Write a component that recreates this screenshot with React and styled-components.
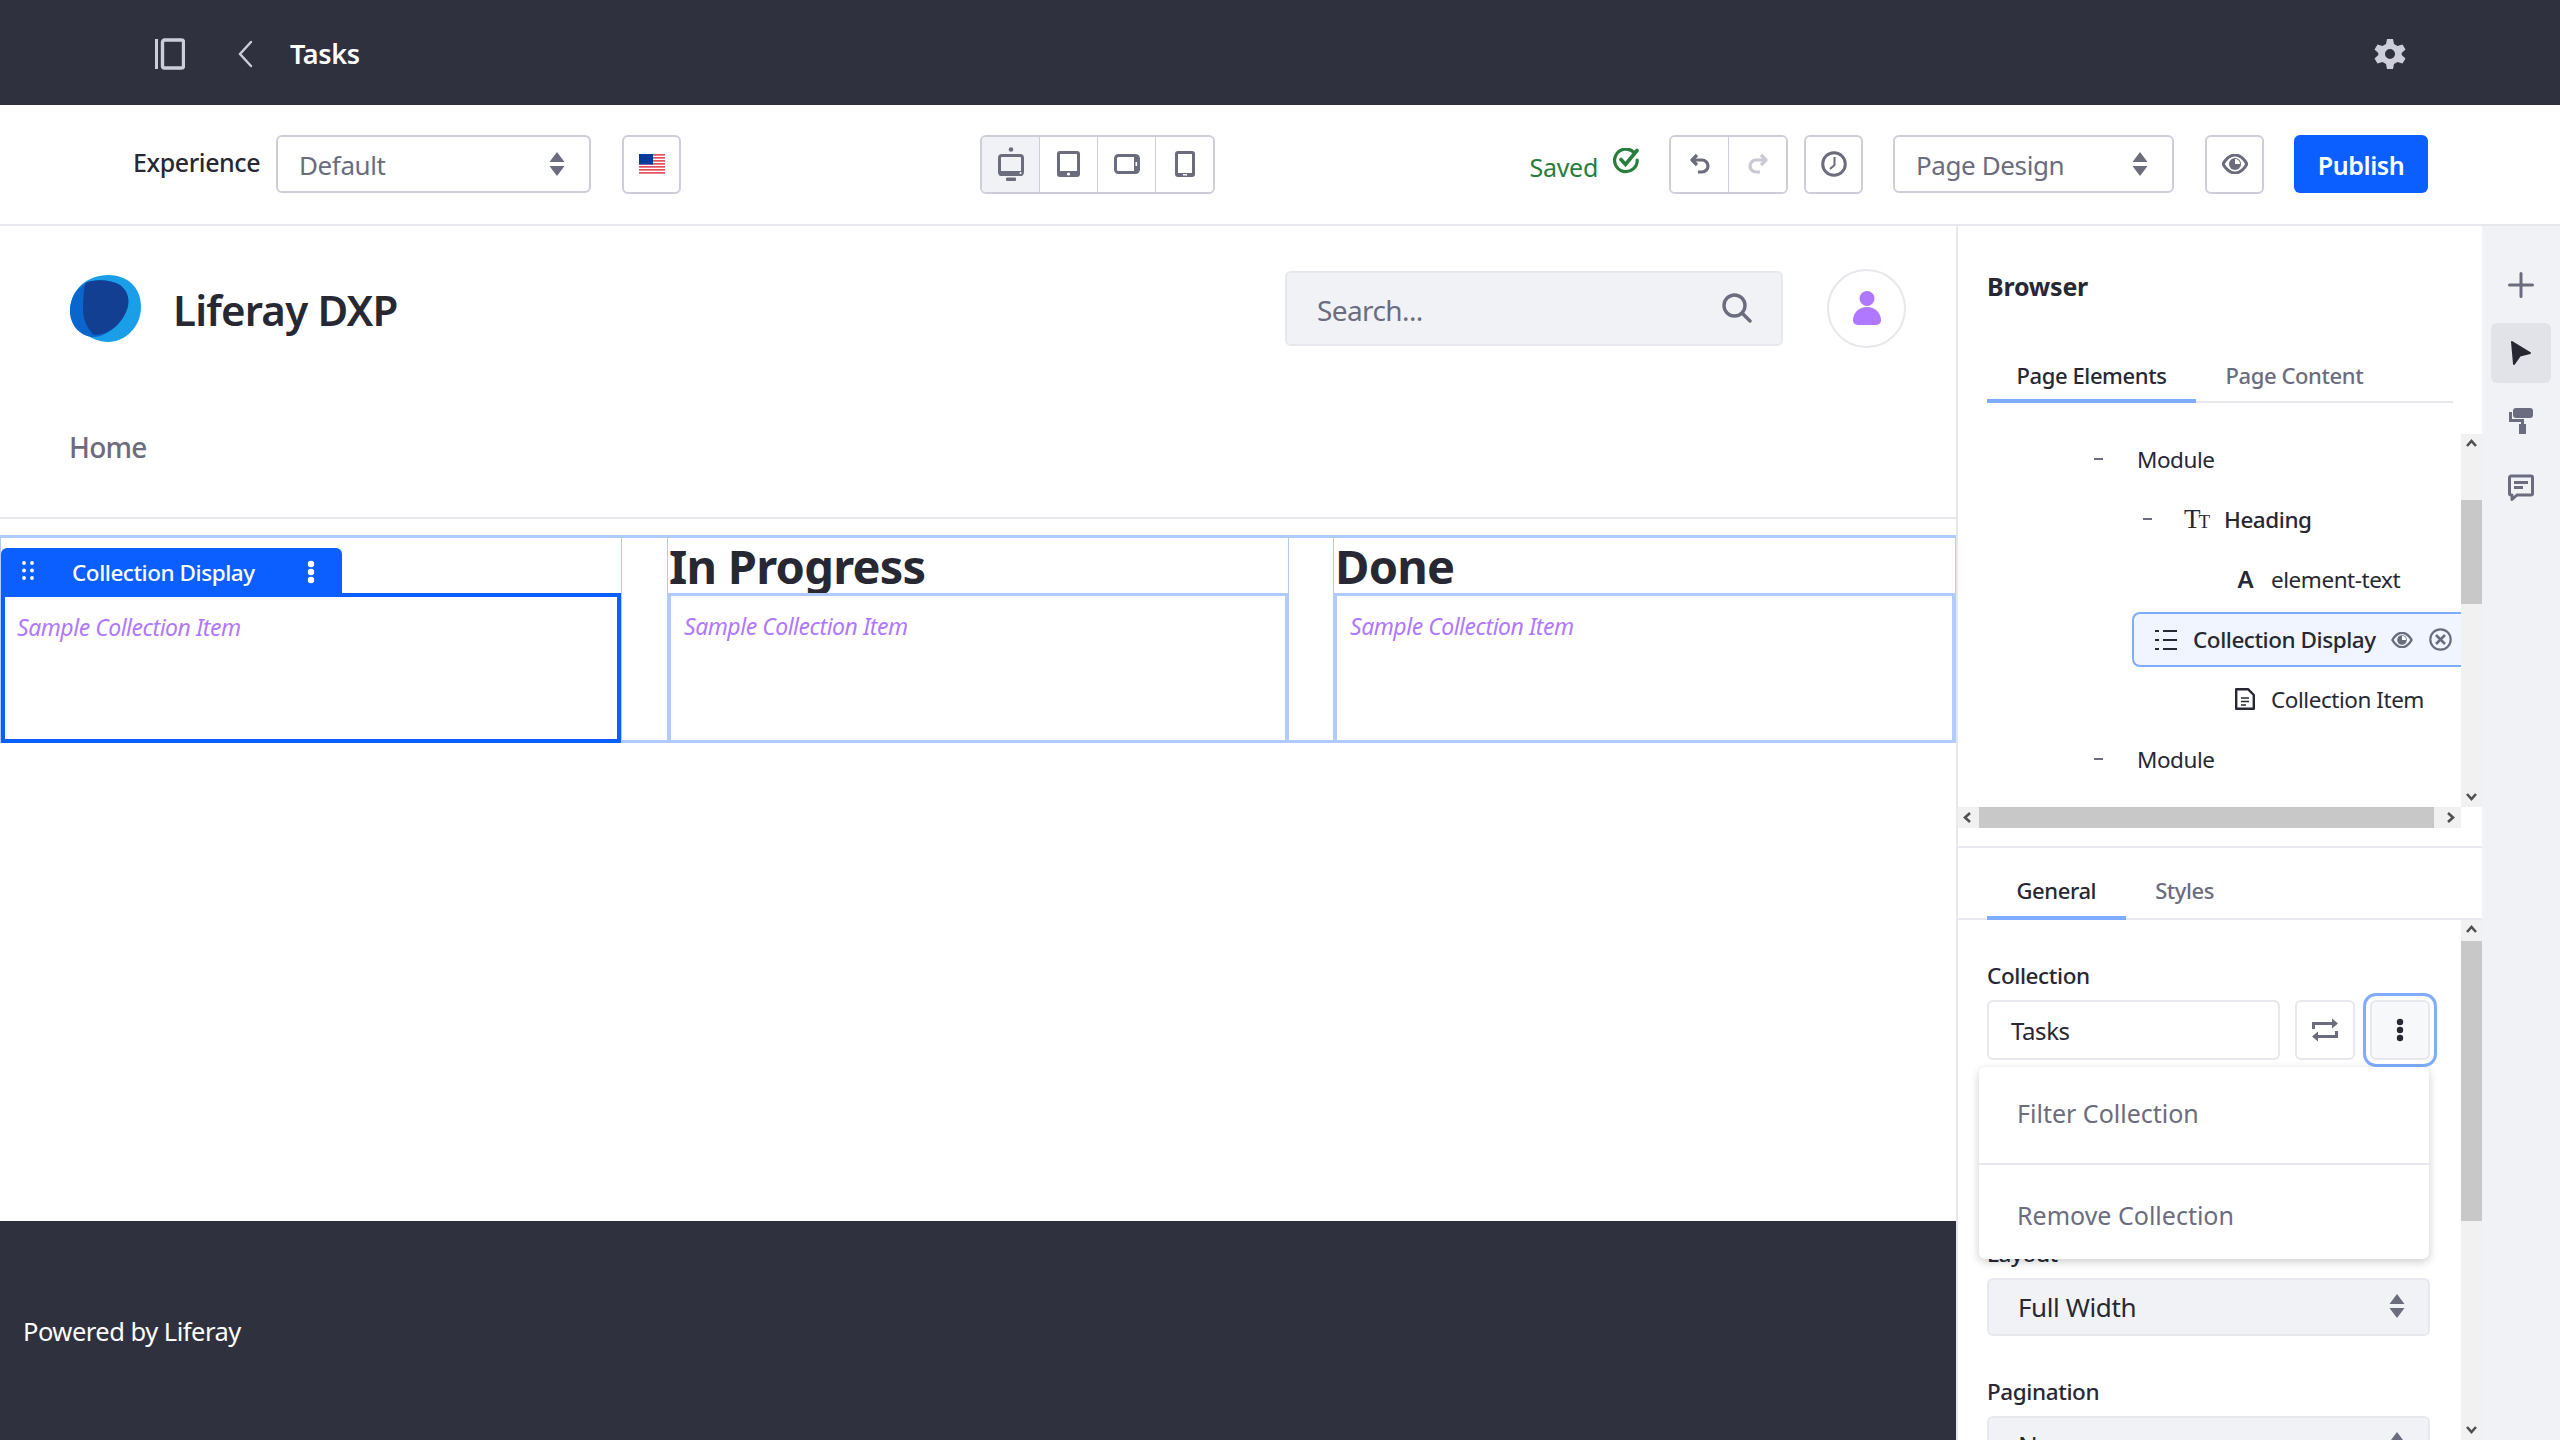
import React from 'react';
import styled, { createGlobalStyle } from 'styled-components';

const Global = createGlobalStyle`
  html, body { margin: 0; padding: 0; background: #fff; }
  body { font-family: "Noto Sans", "Open Sans", sans-serif; color: #272833; }
  * { box-sizing: border-box; }
`;

const Page = styled.div`
  width: 2560px; height: 1440px; overflow: hidden;
  display: flex; flex-direction: column; background: #fff;
`;

/* ---------- top bar ---------- */
const TopBar = styled.header`
  height: 105px; flex: none; background: #30313f;
  display: flex; align-items: center; padding: 3px 154px 0 155px; color: #fff;
`;
const PanelIcon = styled.svg`width: 30px; height: 32px; flex: none;`;
const BackIcon = styled.svg`width: 16px; height: 28px; margin-left: 52px; flex: none;`;
const PageName = styled.div`
  font-size: 27px; font-weight: 600; margin-left: 37px; letter-spacing: -0.35px; margin-top: -2px;
`;
const GearIcon = styled.svg`width: 32px; height: 32px; margin-left: auto; flex: none;`;

/* ---------- toolbar ---------- */
const Toolbar = styled.div`
  height: 121px; flex: none; border-bottom: 2px solid #e7e7ed;
  display: grid; grid-template-columns: 847px 235px 1fr; align-items: center;
  padding: 0 132px 1px 133px;
`;
const ToolLeft = styled.div`display: flex; align-items: center;`;
const ToolRight = styled.div`display: flex; align-items: center; justify-content: flex-end;`;
const ExpLabel = styled.div`
  font-size: 25px; font-weight: 500; width: 143px; margin-top: -4px; letter-spacing: -0.42px;
`;
const Select = styled.div`
  width: ${p => p.$w}px; height: 58px; flex: none; margin-left: ${p => p.$ml || 0}px;
  border: 2px solid ${p => (p.$soft ? '#e7e7ed' : '#cdced9')}; border-radius: 6px;
  background: ${p => (p.$soft ? '#f1f2f5' : '#fff')};
  color: ${p => (p.$soft ? '#272833' : '#6b6c7e')};
  display: flex; align-items: center; justify-content: space-between;
  padding: ${p => (p.$soft ? 0 : 2)}px ${p => (p.$soft ? 23 : 24)}px 0 ${p => (p.$soft ? 29 : 21)}px;
  font-size: 26px; letter-spacing: -0.4px;
`;
const Stepper = styled.svg`width: 16px; height: 24px; flex: none; margin-top: -2px;`;
const IconBtn = styled.div`
  width: 59px; height: 59px; flex: none; border: 2px solid #cdced9; border-radius: 6px;
  display: flex; align-items: center; justify-content: center; background: #fff;
  margin-left: ${p => p.$ml || 0}px;
`;
const Segmented = styled.div`
  display: flex; height: 59px; flex: none; margin-left: ${p => p.$ml || 0}px; width: ${p => p.$w}px;
  border: 2px solid #cdced9; border-radius: 6px; overflow: hidden;
`;
const Segment = styled.div`
  flex: 1; display: flex; align-items: center; justify-content: center;
  background: ${p => (p.$active ? '#f1f2f5' : '#fff')};
  & + & { border-left: 1px solid #cdced9; }
`;
const Saved = styled.div`
  display: flex; align-items: center; color: #287d3c; font-size: 25px; letter-spacing: -0.3px;
  & > span { margin-top: 5px; }
  & > svg { margin-left: 15px; margin-top: -6px; }
`;
const Publish = styled.div`
  width: 134px; height: 58px; margin-left: 30px; background: #0b5fff; color: #fff; border-radius: 6px;
  display: flex; align-items: center; justify-content: center; font-size: 25px; font-weight: 600;
  letter-spacing: -0.4px; padding-top: 2px;
`;

/* ---------- body ---------- */
const Body = styled.div`flex: 1; min-height: 0; display: flex;`;
const Main = styled.main`
  width: 1956px; flex: none; display: flex; flex-direction: column;
`;
const SiteHeader = styled.div`
  height: 164px; flex: none; display: flex; align-items: center; padding: 0 50px 0 70px;
`;
const LogoMark = styled.svg`width: 71px; height: 67px; flex: none;`;
const SiteName = styled.div`
  font-size: 42px; font-weight: 600; margin-left: 32px; letter-spacing: -0.8px; padding-top: 2px;
`;
const Search = styled.div`
  width: 498px; height: 75px; margin-left: auto; background: #f1f2f5;
  border: 2px solid #e7e7ed; border-radius: 6px;
  display: flex; align-items: center; justify-content: space-between;
  padding: 0 29px 0 30px; font-size: 28px; color: #6b6c7e; letter-spacing: -0.6px;
  & > span { padding-top: 3px; }
`;
const Avatar = styled.div`
  width: 79px; height: 79px; margin-left: 44px; border-radius: 50%; border: 2px solid #e7e7ed;
  display: flex; align-items: center; justify-content: center; flex: none;
`;
const Nav = styled.nav`
  height: 129px; flex: none; border-bottom: 2px solid #e7e7ed; padding: 38px 0 0 69px;
  font-size: 28px; line-height: 38px; color: #6b6c7e; font-weight: 500; letter-spacing: -0.75px;
`;
const Columns = styled.div`
  margin-top: 16px; height: 208px; flex: none;
  display: grid; grid-template-columns: 621px 45px 622px 44px 623px;
  border-top: 3px solid #b0ccff; border-left: 1px solid #b0ccff;
`;
const Column = styled.div`
  position: relative; display: flex; flex-direction: column; min-width: 0;
  border-left: ${p => (p.$first ? 0 : 1)}px solid #b0ccff; border-right: 1px solid #b0ccff;
`;
const Gutter = styled.div`border-bottom: 3px solid #b0ccff;`;
const ColHeading = styled.h2`
  margin: 0; height: 55px; flex: none; font-size: 47px; font-weight: 700; line-height: 57px;
  padding-left: 1px; letter-spacing: -0.75px; color: #272833; white-space: nowrap;
`;
const CollectionBox = styled.div`
  flex: 1; min-height: 0; padding: 15px 0 0 ${p => (p.$sel ? 12 : 13)}px;
  border: ${p => (p.$sel ? '4px solid #0b5fff' : '3px solid #b0ccff')};
  font-size: 23px; font-style: italic; color: #af78ff; line-height: 30px; letter-spacing: -0.48px;
`;
const ElementLabel = styled.div`
  position: absolute; left: 0; top: 10px; width: 341px; height: 46px;
  background: #0b5fff; color: #fff; border-radius: 6px 6px 0 0;
  display: flex; align-items: center; padding-left: 21px; font-size: 22.5px; font-weight: 500; letter-spacing: -0.45px;
  & > span { padding-top: 3px; }
`;
const Grip = styled.svg`width: 12px; height: 19px; flex: none; margin-right: 38px; margin-top: -2px;`;
const Kebab = styled.svg`width: 8px; height: 24px; flex: none;`;
const LabelKebab = styled(Kebab)`margin-left: 52px; margin-top: 2px;`;
const Spacer = styled.div`flex: 1;`;
const Footer = styled.footer`
  height: 219px; flex: none; background: #30313f; color: #fff;
  display: flex; align-items: center; padding: 0 0 0 23px; font-size: 25.5px; letter-spacing: -0.5px;
`;

/* ---------- sidebar ---------- */
const Side = styled.aside`
  width: 526px; flex: none; border-left: 2px solid #e7e7ed;
  display: flex; flex-direction: column; min-height: 0;
`;
const SideTitle = styled.div`
  height: 122px; flex: none; padding: 42px 0 0 29px;
  font-size: 25px; line-height: 36px; font-weight: 700; letter-spacing: -0.2px;
`;
const Tabs = styled.div`
  flex: none; display: flex; height: ${p => p.$h}px; margin-right: ${p => p.$mr}px;
  margin-left: ${p => p.$ml}px; padding-left: ${p => p.$pl}px;
  border-bottom: 2px solid #e7e7ed;
`;
const Tab = styled.div`
  height: calc(100% + 2px); padding: ${p => p.$pt || 2}px 29.5px 0; display: flex; align-items: center;
  font-size: 22px; font-weight: 500; letter-spacing: -0.4px;
  color: ${p => (p.$active ? '#272833' : '#6b6c7e')};
  border-bottom: ${p => (p.$active ? '4px solid #80acff' : '4px solid transparent')};
`;
const TreeArea = styled.div`
  margin-top: 31px; height: 373px; flex: none; display: flex; min-height: 0;
`;
const Tree = styled.div`flex: 1; min-width: 0; overflow: hidden;`;
const TreeInner = styled.div`margin-top: -5px;`;
const Row = styled.div`
  height: 60px; display: flex; align-items: center; padding-left: ${p => p.$pad}px;
  font-size: 22.5px; letter-spacing: -0.45px; color: #272833; white-space: nowrap;
  font-weight: ${p => (p.$strong ? 500 : 400)};
`;
const SelRow = styled.div`
  height: 55px; margin: 3px 0 2px 174px; display: flex; align-items: center;
  padding-left: 21px; background: #f0f5ff; border: 2px solid #80acff; border-right: 0;
  border-radius: 8px 0 0 8px; font-size: 22.5px; letter-spacing: -0.45px; font-weight: 500; white-space: nowrap;
`;
const RowGap = styled.span`width: 15px; flex: none;`;
const Dash = styled.span`
  width: 9px; height: 2px; background: #6b6c7e; flex: none; margin-right: 34px;
`;
const TreeGlyph = styled.span`
  flex: none; width: ${p => p.$w}px; margin-right: ${p => p.$mr}px; text-align: center; line-height: 1;
  display: flex; align-items: baseline; justify-content: center;
  font-family: ${p => (p.$serif ? '"Liberation Serif", serif' : '"Noto Sans", sans-serif')};
  font-size: ${p => p.$size}px; font-weight: ${p => (p.$serif ? 400 : 600)}; letter-spacing: 0;
`;
const SmallGlyph = styled.span`font-size: 19px; margin-left: -2px;`;
const TreeIcon = styled.svg`flex: none; width: ${p => p.$w}px; height: ${p => p.$h}px; margin-right: ${p => p.$mr}px;`;
const CloseIcon = styled.svg`width: 23px; height: 23px; flex: none; margin-left: 16px;`;
const VBar = styled.div`
  width: 21px; flex: none; background: #f1f1f1; display: flex; flex-direction: column;
`;
const BarArrow = styled.div`
  height: 21px; width: 21px; flex: none; display: flex; align-items: center; justify-content: center;
`;
const BarThumbV = styled.div`height: ${p => p.$h}px; flex: none; background: #c8c8c8; margin-top: ${p => p.$mt}px;`;
const BarFill = styled.div`flex: 1;`;
const HBar = styled.div`
  height: 21px; flex: none; margin-right: 21px; background: #f1f1f1; display: flex; align-items: stretch;
`;
const BarThumbH = styled.div`width: ${p => p.$w}px; flex: none; background: #c8c8c8;`;
const SideDivider = styled.div`height: 2px; margin-top: 18px; flex: none; background: #e7e7ed;`;
const Lower = styled.div`flex: 1; min-height: 0; display: flex; overflow: hidden;`;
const Form = styled.div`
  position: relative; flex: 1; min-width: 0; padding: 41px 0 0 29px;
`;
const FieldLabel = styled.div`
  font-size: 22.5px; line-height: 30px; font-weight: 500; letter-spacing: -0.4px;
`;
const InputRow = styled.div`display: flex; align-items: center; margin-top: 9px; `;
const Input = styled.div`
  width: 293px; height: 60px; border: 2px solid #e7e7ed; border-radius: 6px; background: #fff;
  display: flex; align-items: center; padding-left: 22px; font-size: 24px; letter-spacing: -0.4px; color: #272833;
`;
const SquareBtn = styled.div`
  width: 60px; height: 60px; flex: none; margin-left: 15px; border: 2px solid #e7e7ed; border-radius: 6px; background: #fff;
  display: flex; align-items: center; justify-content: center;
`;
const FocusBtn = styled(SquareBtn)`
  background: #f7f8f9; border-color: #e7e7ed; box-shadow: 0 0 0 4px #fff, 0 0 0 7px #80acff;
`;
const Dropdown = styled.div`
  position: absolute; left: 21px; top: 147px; width: 450px; height: 192px; background: #fff; border-radius: 6px;
  box-shadow: 0 3px 10px rgba(0,0,0,0.2); z-index: 2; display: flex; flex-direction: column;
`;
const DropItem = styled.div`
  height: 96px; flex: none; display: flex; align-items: center; padding: 0 0 4px 38px; font-size: 25px; color: #6b6c7e;
  & + & { border-top: 2px solid #e7e7ed; padding: 6px 0 0 38px; }
`;
const LayoutLabel = styled(FieldLabel)`margin-top: 179px;`;
const SecondLabel = styled(FieldLabel)`margin-top: 41px;`;
const FieldSelect = styled.div`margin-top: 9px;`;

/* ---------- rail ---------- */
const Rail = styled.nav`
  flex: 1; background: #f1f2f5; padding: 29px 9px 0 9px; display: flex; flex-direction: column; gap: 8px;
`;
const RailBtn = styled.div`
  width: 60px; height: 60px; border-radius: 6px; display: flex; align-items: center; justify-content: center;
  background: ${p => (p.$active ? '#e2e3e8' : 'transparent')};
`;

/* ---------- icons ---------- */
const G = '#6b6c7e';
const StepIcon = () => (
  <Stepper viewBox="0 0 16 24"><path d="M8 0 L15.5 10 H.5Z M8 24 L.5 14 H15.5Z" fill={G} /></Stepper>
);
const KebabIcon = ({ c = '#fff', as: As = Kebab }) => (
  <As viewBox="0 0 8 24"><circle cx="4" cy="4" r="3.2" fill={c} /><circle cx="4" cy="12" r="3.2" fill={c} /><circle cx="4" cy="20" r="3.2" fill={c} /></As>
);
const Desktop = () => (
  <svg width="26" height="34" viewBox="0 0 26 34">
    <circle cx="13" cy="2.5" r="2.3" fill={G} />
    <rect x="1.5" y="8.5" width="23" height="19" rx="2.5" fill="#f1f2f5" stroke={G} strokeWidth="3" />
    <rect x="1" y="24" width="24" height="5" rx="2" fill={G} />
    <circle cx="22.5" cy="26" r="1" fill="#fff" />
    <rect x="8" y="30.5" width="10" height="3.5" rx="1" fill={G} />
  </svg>
);
const Tablet = () => (
  <svg width="23" height="26" viewBox="0 0 23 26">
    <rect x="0" y="0" width="23" height="26" rx="3" fill={G} />
    <rect x="3" y="3" width="17" height="17" fill="#fff" />
    <circle cx="11.5" cy="23" r="1.6" fill="#fff" />
  </svg>
);
const Landscape = () => (
  <svg width="26" height="20" viewBox="0 0 26 20">
    <rect x="1.5" y="1.5" width="23" height="17" rx="3" fill="#fff" stroke={G} strokeWidth="3" />
    <rect x="20" y="1.5" width="4" height="17" fill={G} />
    <rect x="21.5" y="8" width="1.6" height="4" fill="#fff" />
  </svg>
);
const Phone = () => (
  <svg width="20" height="26" viewBox="0 0 20 26">
    <rect x="0" y="0" width="20" height="26" rx="3" fill={G} />
    <rect x="3" y="3" width="14" height="19" fill="#fff" />
    <rect x="8" y="23" width="4" height="1.5" fill="#fff" />
  </svg>
);
const Flag = () => (
  <svg width="26" height="20" viewBox="0 0 26 20">
    <rect width="26" height="20" fill="#fff" />
    {[0, 3, 6, 9, 12, 15, 18].map(y => <rect key={y} y={y} width="26" height="1.7" fill="#e2515c" />)}
    <rect width="14" height="10.5" fill="#003b9b" />
  </svg>
);
const CheckCircle = () => (
  <svg width="26" height="26" viewBox="0 0 26 26" fill="none" stroke="#287d3c" strokeWidth="3.2" strokeLinecap="round">
    <path d="M20.5 4 A11.3 11.3 0 1 0 24.2 12" />
    <path d="M8 11.5 L12.5 16.5 L24 2.5" strokeWidth="3.6" />
  </svg>
);
const Undo = () => (
  <svg width="20" height="22" viewBox="0 0 20 22" fill="none" stroke={G} strokeWidth="3.2">
    <path d="M7 2 L2 7 L7 12" strokeLinejoin="round" />
    <path d="M3 7 H12 A6 6 0 0 1 12 19 H8" />
  </svg>
);
const Redo = () => (
  <svg width="20" height="22" viewBox="0 0 20 22" fill="none" stroke="#c8c9d2" strokeWidth="3.2">
    <path d="M13 2 L18 7 L13 12" strokeLinejoin="round" />
    <path d="M17 7 H8 A6 6 0 0 0 8 19 H12" />
  </svg>
);
const Clock = () => (
  <svg width="26" height="26" viewBox="0 0 26 26" fill="none" stroke={G}>
    <circle cx="13" cy="13" r="11.3" strokeWidth="3" />
    <path d="M13.5 6 V14 L9 18" strokeWidth="2" />
  </svg>
);
const Eye = ({ w = 26, h = 20, c = G }) => (
  <svg width={w} height={h} viewBox="0 0 26 20">
    <path d="M1 10 C5 3 9 1 13 1 C17 1 21 3 25 10 C21 17 17 19 13 19 C9 19 5 17 1 10Z" fill="none" stroke={c} strokeWidth="3" strokeLinejoin="round" />
    <circle cx="13" cy="10" r="6" fill={c} />
    <path d="M13 10 V5 A5 5 0 0 1 18 10Z" fill="#fff" />
  </svg>
);
const Logo = () => (
  <LogoMark viewBox="0 0 71 67">
    <path d="M38 0 C57 0 71 12 71 32 C71 52 55 67 38 67 C20 67 0 50 0 36 C0 14 18 0 38 0Z" fill="#1a9ee8" />
    <path d="M14 9 C22 4 40 4 50 10 C58 16 61 26 56 37 C50 51 35 62 24 62 C12 62 0 52 0 36 C0 24 6 14 14 9Z" fill="#0a65cc" />
    <path d="M15 8 C24 4 40 4 50 10 C58 16 61 26 56 37 C50 51 37 60 24 60 C17 54 13 44 13 34 C13 24 14 15 15 8Z" fill="#123f92" />
  </LogoMark>
);
const SearchIcon = () => (
  <svg width="30" height="30" viewBox="0 0 30 30" fill="none" stroke={G} strokeWidth="3.4" strokeLinecap="round">
    <circle cx="12.5" cy="12.5" r="10.5" /><path d="M20 20 L28 28" />
  </svg>
);
const UserIcon = () => (
  <svg width="30" height="34" viewBox="0 0 30 34" fill="#af78ff">
    <circle cx="15" cy="7.5" r="7.5" />
    <path d="M15 16 C24 16 29 23 29 29 C29 33 26 34 23 34 H7 C4 34 1 33 1 29 C1 23 6 16 15 16Z" />
  </svg>
);
const ListIcon = () => (
  <TreeIcon $w={22} $h={22} $mr={16} viewBox="0 0 22 22" fill="#272833">
    <rect x="0" y="1" width="4" height="2" /><rect x="8" y="1" width="14" height="2" />
    <rect x="0" y="10" width="4" height="2" /><rect x="8" y="10" width="14" height="2" />
    <rect x="0" y="19" width="4" height="2" /><rect x="8" y="19" width="14" height="2" />
  </TreeIcon>
);
const DocIcon = () => (
  <TreeIcon $w={20} $h={22} $mr={16} viewBox="0 0 20 22" fill="none" stroke="#272833">
    <path d="M1.2 1.2 H13 L18.8 7 V20.8 H1.2Z" strokeWidth="2.4" strokeLinejoin="round" />
    <path d="M6 10 H14 M6 13.5 H14 M6 17 H11" strokeWidth="1.4" />
  </TreeIcon>
);
const XCircle = () => (
  <CloseIcon viewBox="0 0 23 23" fill="none" stroke={G} strokeWidth="2.2">
    <circle cx="11.5" cy="11.5" r="10.2" /><path d="M7 7 L16 16 M16 7 L7 16" strokeWidth="2.6" />
  </CloseIcon>
);
const Swap = () => (
  <svg width="26" height="24" viewBox="0 0 26 24" fill="none" stroke={G} strokeWidth="3">
    <path d="M1.5 11 V5.5 H21" /><path d="M24.5 13 V18.5 H5" />
    <path d="M20 0.5 L26 5.5 L20 10.5Z" fill={G} stroke="none" />
    <path d="M6 13.5 L0 18.5 L6 23.5Z" fill={G} stroke="none" />
  </svg>
);
const Chevron = ({ d }) => {
  const paths = { up: 'M2 8 L6.5 3 L11 8', down: 'M2 4 L6.5 9 L11 4', left: 'M8 2 L3 6.5 L8 11', right: 'M4 2 L9 6.5 L4 11' };
  return (
    <svg width="13" height="13" viewBox="0 0 13 13" fill="none" stroke="#505050" strokeWidth="2.6">
      <path d={paths[d]} />
    </svg>
  );
};

export default function App() {
  return (
    <Page>
      <Global />
      <TopBar>
        <PanelIcon viewBox="0 0 30 32" fill="none" stroke="#cdced9">
          <path d="M1.5 1 V31" strokeWidth="3" />
          <rect x="7.5" y="2" width="21" height="28" rx="2" strokeWidth="3.4" />
        </PanelIcon>
        <BackIcon viewBox="0 0 16 28" fill="none" stroke="#cdced9" strokeWidth="2.4" strokeLinecap="round">
          <path d="M14 2 L3 14 L14 26" />
        </BackIcon>
        <PageName>Tasks</PageName>
        <GearIcon viewBox="0 0 32 32" fill="#cdced9">
          <path fillRule="evenodd" d="M13 1 H19 L20 6 L23.5 8 L28.5 6.5 L31.5 11.5 L27.7 15 V17 L31.5 20.5 L28.5 25.5 L23.5 24 L20 26 L19 31 H13 L12 26 L8.5 24 L3.5 25.5 L0.5 20.5 L4.3 17 V15 L0.5 11.5 L3.5 6.5 L8.5 8 L12 6Z M16 11 A5 5 0 1 0 16 21 A5 5 0 1 0 16 11Z" />
        </GearIcon>
      </TopBar>

      <Toolbar>
        <ToolLeft>
          <ExpLabel>Experience</ExpLabel>
          <Select $w={315}><span>Default</span><StepIcon /></Select>
          <IconBtn $ml={31}><Flag /></IconBtn>
        </ToolLeft>
        <Segmented $w={235}>
          <Segment $active><Desktop /></Segment>
          <Segment><Tablet /></Segment>
          <Segment><Landscape /></Segment>
          <Segment><Phone /></Segment>
        </Segmented>
        <ToolRight>
          <Saved><span>Saved</span><CheckCircle /></Saved>
          <Segmented $ml={30} $w={119}>
            <Segment><Undo /></Segment>
            <Segment><Redo /></Segment>
          </Segmented>
          <IconBtn $ml={16}><Clock /></IconBtn>
          <Select $ml={30} $w={281}><span>Page Design</span><StepIcon /></Select>
          <IconBtn $ml={31}><Eye /></IconBtn>
          <Publish>Publish</Publish>
        </ToolRight>
      </Toolbar>

      <Body>
        <Main>
          <SiteHeader>
            <Logo />
            <SiteName>Liferay DXP</SiteName>
            <Search><span>Search...</span><SearchIcon /></Search>
            <Avatar><UserIcon /></Avatar>
          </SiteHeader>
          <Nav>Home</Nav>
          <Columns>
            <Column $first>
              <ColHeading>To Do</ColHeading>
              <CollectionBox $sel>Sample Collection Item</CollectionBox>
              <ElementLabel>
                <Grip viewBox="0 0 12 19" fill="#fff">
                  {[2, 9.5, 17].map(y => [2, 10].map(x => <circle key={`${x}${y}`} cx={x} cy={y} r="1.9" />))}
                </Grip>
                <span>Collection Display</span>
                <KebabIcon as={LabelKebab} />
              </ElementLabel>
            </Column>
            <Gutter />
            <Column>
              <ColHeading>In Progress</ColHeading>
              <CollectionBox>Sample Collection Item</CollectionBox>
            </Column>
            <Gutter />
            <Column>
              <ColHeading>Done</ColHeading>
              <CollectionBox>Sample Collection Item</CollectionBox>
            </Column>
          </Columns>
          <Spacer />
          <Footer>Powered by Liferay</Footer>
        </Main>

        <Side>
          <SideTitle>Browser</SideTitle>
          <Tabs $h={55} $ml={29} $mr={29} $pl={0}>
            <Tab $active>Page Elements</Tab>
            <Tab>Page Content</Tab>
          </Tabs>
          <TreeArea>
            <Tree>
              <TreeInner>
                <Row $pad={136}><Dash />Module</Row>
                <Row $pad={185} $strong>
                  <Dash />
                  <TreeGlyph $serif $w={22} $mr={16} $size={27}>T<SmallGlyph>T</SmallGlyph></TreeGlyph>
                  Heading
                </Row>
                <Row $pad={279}><TreeGlyph $w={17} $mr={17} $size={24}>A</TreeGlyph>element-text</Row>
                <SelRow>
                  <ListIcon />
                  Collection Display
                  <RowGap />
                  <Eye w={22} h={16} />
                  <XCircle />
                </SelRow>
                <Row $pad={277}><DocIcon />Collection Item</Row>
                <Row $pad={136}><Dash />Module</Row>
              </TreeInner>
            </Tree>
            <VBar>
              <BarArrow><Chevron d="up" /></BarArrow>
              <BarThumbV $mt={45} $h={104} />
              <BarFill />
              <BarArrow><Chevron d="down" /></BarArrow>
            </VBar>
          </TreeArea>
          <HBar>
            <BarArrow><Chevron d="left" /></BarArrow>
            <BarThumbH $w={455} />
            <BarFill />
            <BarArrow><Chevron d="right" /></BarArrow>
          </HBar>
          <SideDivider />
          <Tabs $h={72} $ml={0} $mr={0} $pl={29}>
            <Tab $active $pt={16}>General</Tab>
            <Tab $pt={16}>Styles</Tab>
          </Tabs>
          <Lower>
            <Form>
              <FieldLabel>Collection</FieldLabel>
              <InputRow>
                <Input>Tasks</Input>
                <SquareBtn><Swap /></SquareBtn>
                <FocusBtn><KebabIcon c="#272833" /></FocusBtn>
              </InputRow>
              <Dropdown>
                <DropItem>Filter Collection</DropItem>
                <DropItem>Remove Collection</DropItem>
              </Dropdown>
              <LayoutLabel>Layout</LayoutLabel>
              <FieldSelect><Select $soft $w={443}><span>Full Width</span><StepIcon /></Select></FieldSelect>
              <SecondLabel>Pagination</SecondLabel>
              <FieldSelect><Select $soft $w={443}><span>None</span><StepIcon /></Select></FieldSelect>
            </Form>
            <VBar>
              <BarArrow><Chevron d="up" /></BarArrow>
              <BarThumbV $mt={0} $h={280} />
              <BarFill />
              <BarArrow><Chevron d="down" /></BarArrow>
            </VBar>
          </Lower>
        </Side>

        <Rail>
          <RailBtn>
            <svg width="26" height="26" viewBox="0 0 26 26" stroke={G} strokeWidth="3" strokeLinecap="round"><path d="M13 1.5 V24.5 M1.5 13 H24.5" /></svg>
          </RailBtn>
          <RailBtn $active>
            <svg width="22" height="26" viewBox="0 0 22 26" fill="#272833" stroke="#272833" strokeWidth="2" strokeLinejoin="round"><path d="M2 2 L20 13 L10 15.5 L4 24Z" /></svg>
          </RailBtn>
          <RailBtn>
            <svg width="24" height="26" viewBox="0 0 24 26" fill={G}>
              <rect x="4" y="0" width="20" height="10" rx="3" />
              <path d="M0 4 H3 V11 H15 V16 H12 V14 H0Z" />
              <rect x="10" y="16" width="7" height="10" />
            </svg>
          </RailBtn>
          <RailBtn>
            <svg width="26" height="27" viewBox="0 1.5 26 27" overflow="visible" fill="none" stroke={G}>
              <path d="M3 1.5 H23 A1.5 1.5 0 0 1 24.5 3 V19 A1.5 1.5 0 0 1 23 20.5 H9 L4 25 V20.5 H3 A1.5 1.5 0 0 1 1.5 19 V3 A1.5 1.5 0 0 1 3 1.5Z" strokeWidth="3" strokeLinejoin="round" />
              <path d="M6 8 H20 M6 13 H15" strokeWidth="3" />
            </svg>
          </RailBtn>
        </Rail>
      </Body>
    </Page>
  );
}
